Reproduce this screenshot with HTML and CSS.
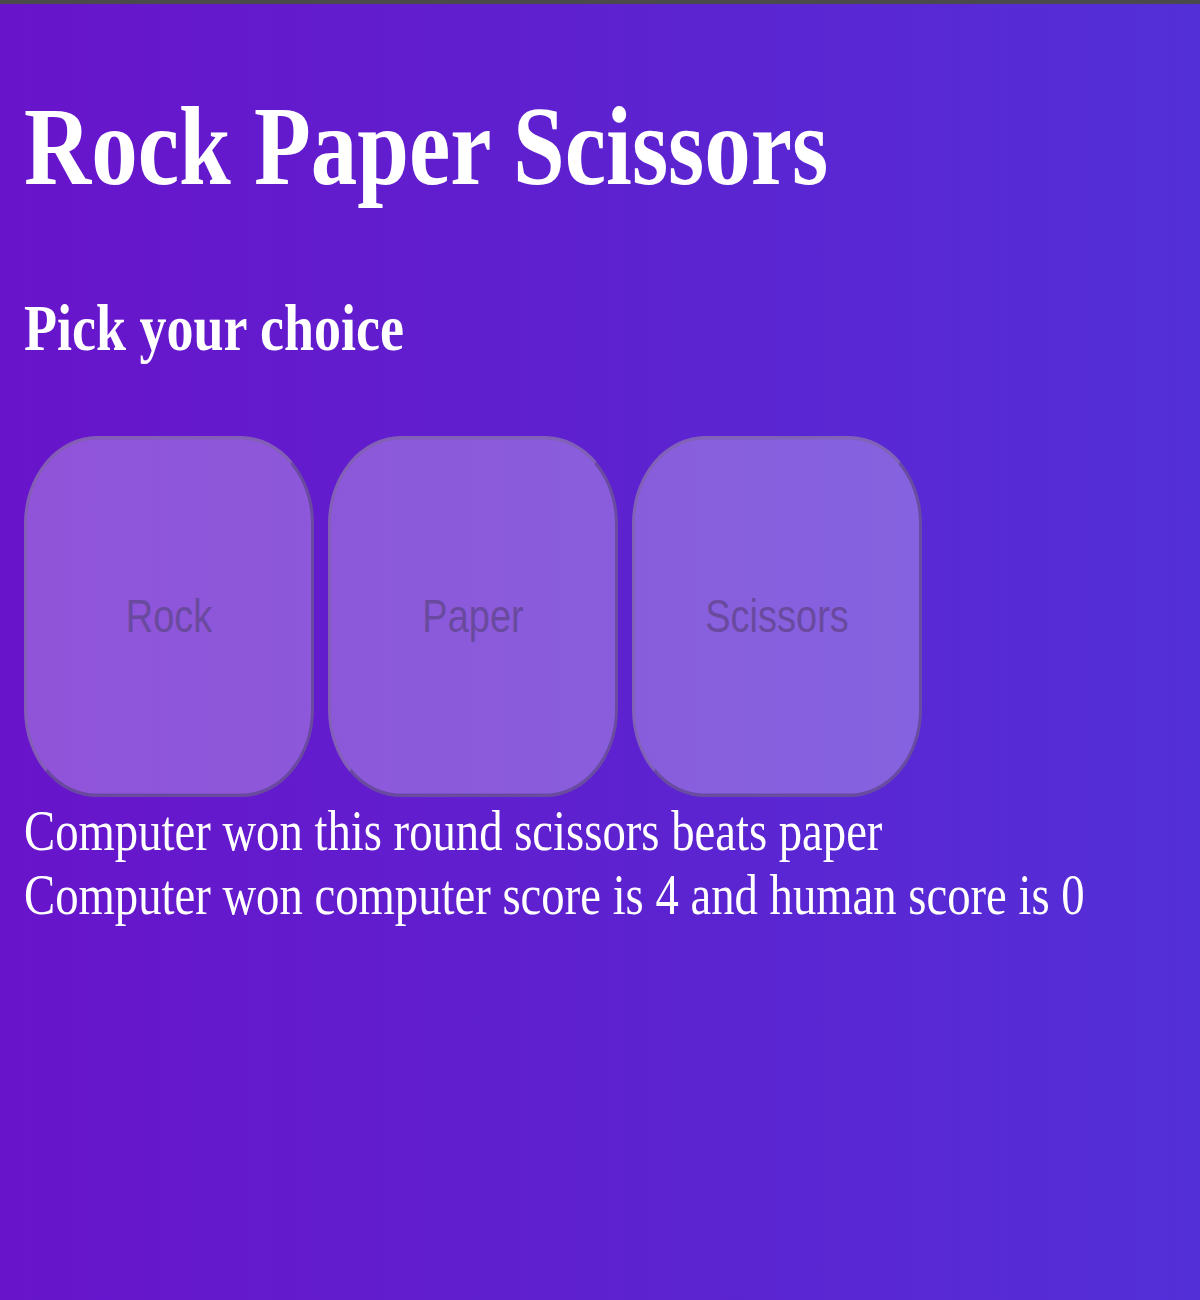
FILE: index.html
```html
<!DOCTYPE html>
<html lang="en">
<head>
<meta charset="utf-8">
<title>Rock Paper Scissors</title>
<link rel="stylesheet" href="styles.css">
</head>
<body>
  <main class="page">
    <h1 class="title">Rock Paper Scissors</h1>
    <h2 class="subtitle">Pick your choice</h2>
    <div class="choices">
      <button class="choice" type="button">Rock</button>
      <button class="choice" type="button">Paper</button>
      <button class="choice" type="button">Scissors</button>
    </div>
    <div class="results">
      <p class="result">Computer won this round scissors beats paper</p>
      <p class="result">Computer won computer score is 4 and human score is 0</p>
    </div>
  </main>
</body>
</html>
```

FILE: styles.css
```css
html, body {
  height: 100%;
}

body {
  margin: 0;
  box-sizing: border-box;
  border-top: 4px solid #4a4a4c;
  background: linear-gradient(to right, #6814cb 0%, #5f20cf 45%, #532fd8 100%);
  font-family: "Liberation Serif", "Times New Roman", serif;
  color: #ffffff;
  overflow: hidden;
}

.page {
  display: flow-root;
  padding: 0 0 0 24px;
  transform: scaleY(1.2);
  transform-origin: top left;
}

.title {
  margin: 66.7px 0 0 0;
  font-size: 93px;
  line-height: 103px;
  font-weight: bold;
}

.subtitle {
  margin: 70.5px 0 0 0;
  font-size: 54px;
  line-height: 60px;
  font-weight: bold;
}

.choices {
  display: flex;
  gap: 14px;
  margin-top: 60px;
}

.choice {
  box-sizing: border-box;
  width: 290px;
  height: 301px;
  border-radius: 73px;
  border: 3px solid;
  border-color: rgba(125, 100, 160, 0.6) rgba(95, 70, 140, 0.75) rgba(95, 70, 140, 0.75) rgba(125, 100, 160, 0.6);
  background: rgba(255, 255, 255, 0.27);
  display: flex;
  align-items: center;
  justify-content: center;
  padding: 0;
  font-family: "Liberation Sans", Arial, sans-serif;
  font-size: 38px;
  color: #6a4a9e;
}

.results {
  margin-top: 2px;
}

.result {
  margin: 0;
  font-size: 46.7px;
  line-height: 53.3px;
}
```
